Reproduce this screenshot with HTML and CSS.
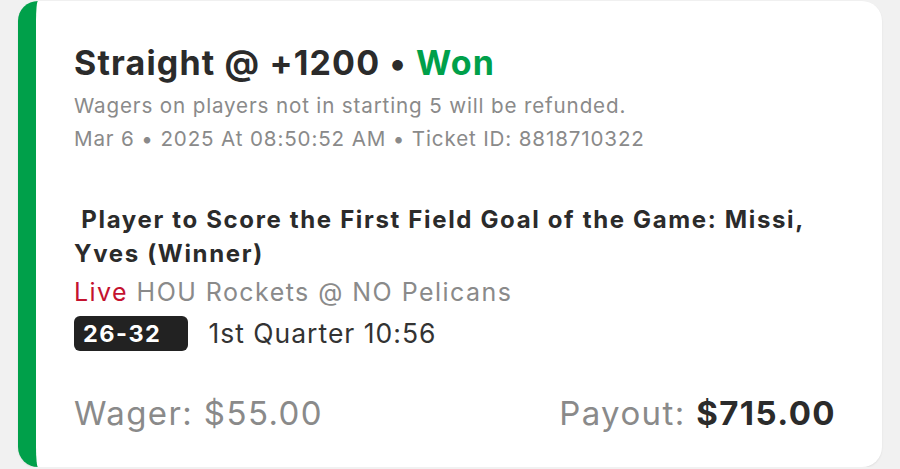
FILE: index.html
```
<!DOCTYPE html>
<html>
<head>
<meta charset="utf-8">
<link rel="stylesheet" href="styles.css">
</head>
<body>
<div class="card">
  <div class="head">
    <div class="title">Straight @ +1200 <span class="dot">•</span> <span class="won">Won</span></div>
    <div class="meta">Wagers on players not in starting 5 will be refunded.</div>
    <div class="meta">Mar 6 • 2025 At 08:50:52 AM • Ticket ID: 8818710322</div>
  </div>
  <div class="leg">
    <div class="market">&nbsp;Player to Score the First Field Goal of the Game: Missi, Yves (Winner)</div>
    <div class="event"><span class="live">Live</span> HOU Rockets @ NO Pelicans</div>
    <div class="score-row">
      <span class="score">26-32</span>
      <span class="clock">1st Quarter 10:56</span>
    </div>
  </div>
  <div class="totals">
    <div class="wager">Wager: $55.00</div>
    <div class="payout">Payout: <strong>$715.00</strong></div>
  </div>
</div>
</body>
</html>
```
FILE: styles.css
```
html, body {
  margin: 0;
  padding: 0;
  background: #f1f1f1;
}
body {
  font-family: Inter, "Noto Sans", sans-serif;
  padding: 1px 18px 0 18px;
}
.card {
  box-sizing: border-box;
  width: 864px;
  height: 466px;
  background: #fff;
  border-left: 18px solid #00a04a;
  border-radius: 20px;
  box-shadow: 0 1px 2px rgba(0,0,0,0.08);
  padding: 40px 46px 0 38px;
  display: flex;
  flex-direction: column;
  color: #2b2b2b;
}
.title {
  font-size: 34px;
  font-weight: 700;
  line-height: 44px;
  letter-spacing: 1.15px;
  margin-bottom: 4px;
}
.won { color: #00a04a; }
.meta {
  font-size: 20.6px;
  line-height: 33px;
  letter-spacing: 0.85px;
  color: #8a8a8a;
}
.leg {
  margin-top: 48px;
}
.market {
  font-size: 24px;
  font-weight: 700;
  line-height: 34px;
  letter-spacing: 1.65px;
  color: #2b2b2b;
}
.event {
  margin-top: 4px;
  font-size: 25px;
  line-height: 34px;
  letter-spacing: 1.45px;
  color: #8a8a8a;
}
.live { color: #c4122f; }
.score-row {
  display: flex;
  align-items: center;
  gap: 20px;
  margin-top: 7px;
}
.score {
  background: #222;
  color: #fff;
  font-weight: 700;
  font-size: 23.5px;
  line-height: 35px;
  letter-spacing: 1.5px;
  border-radius: 6px;
  padding: 0 27px 0 9px;
}
.clock {
  font-size: 26.5px;
  line-height: 35px;
  letter-spacing: 1px;
  color: #333;
}
.totals {
  display: flex;
  justify-content: space-between;
  align-items: baseline;
  margin-top: 42px;
  font-size: 33px;
  line-height: 40px;
  letter-spacing: 1.4px;
  color: #8a8a8a;
}
.payout strong {
  color: #2b2b2b;
  font-weight: 700;
}
```
